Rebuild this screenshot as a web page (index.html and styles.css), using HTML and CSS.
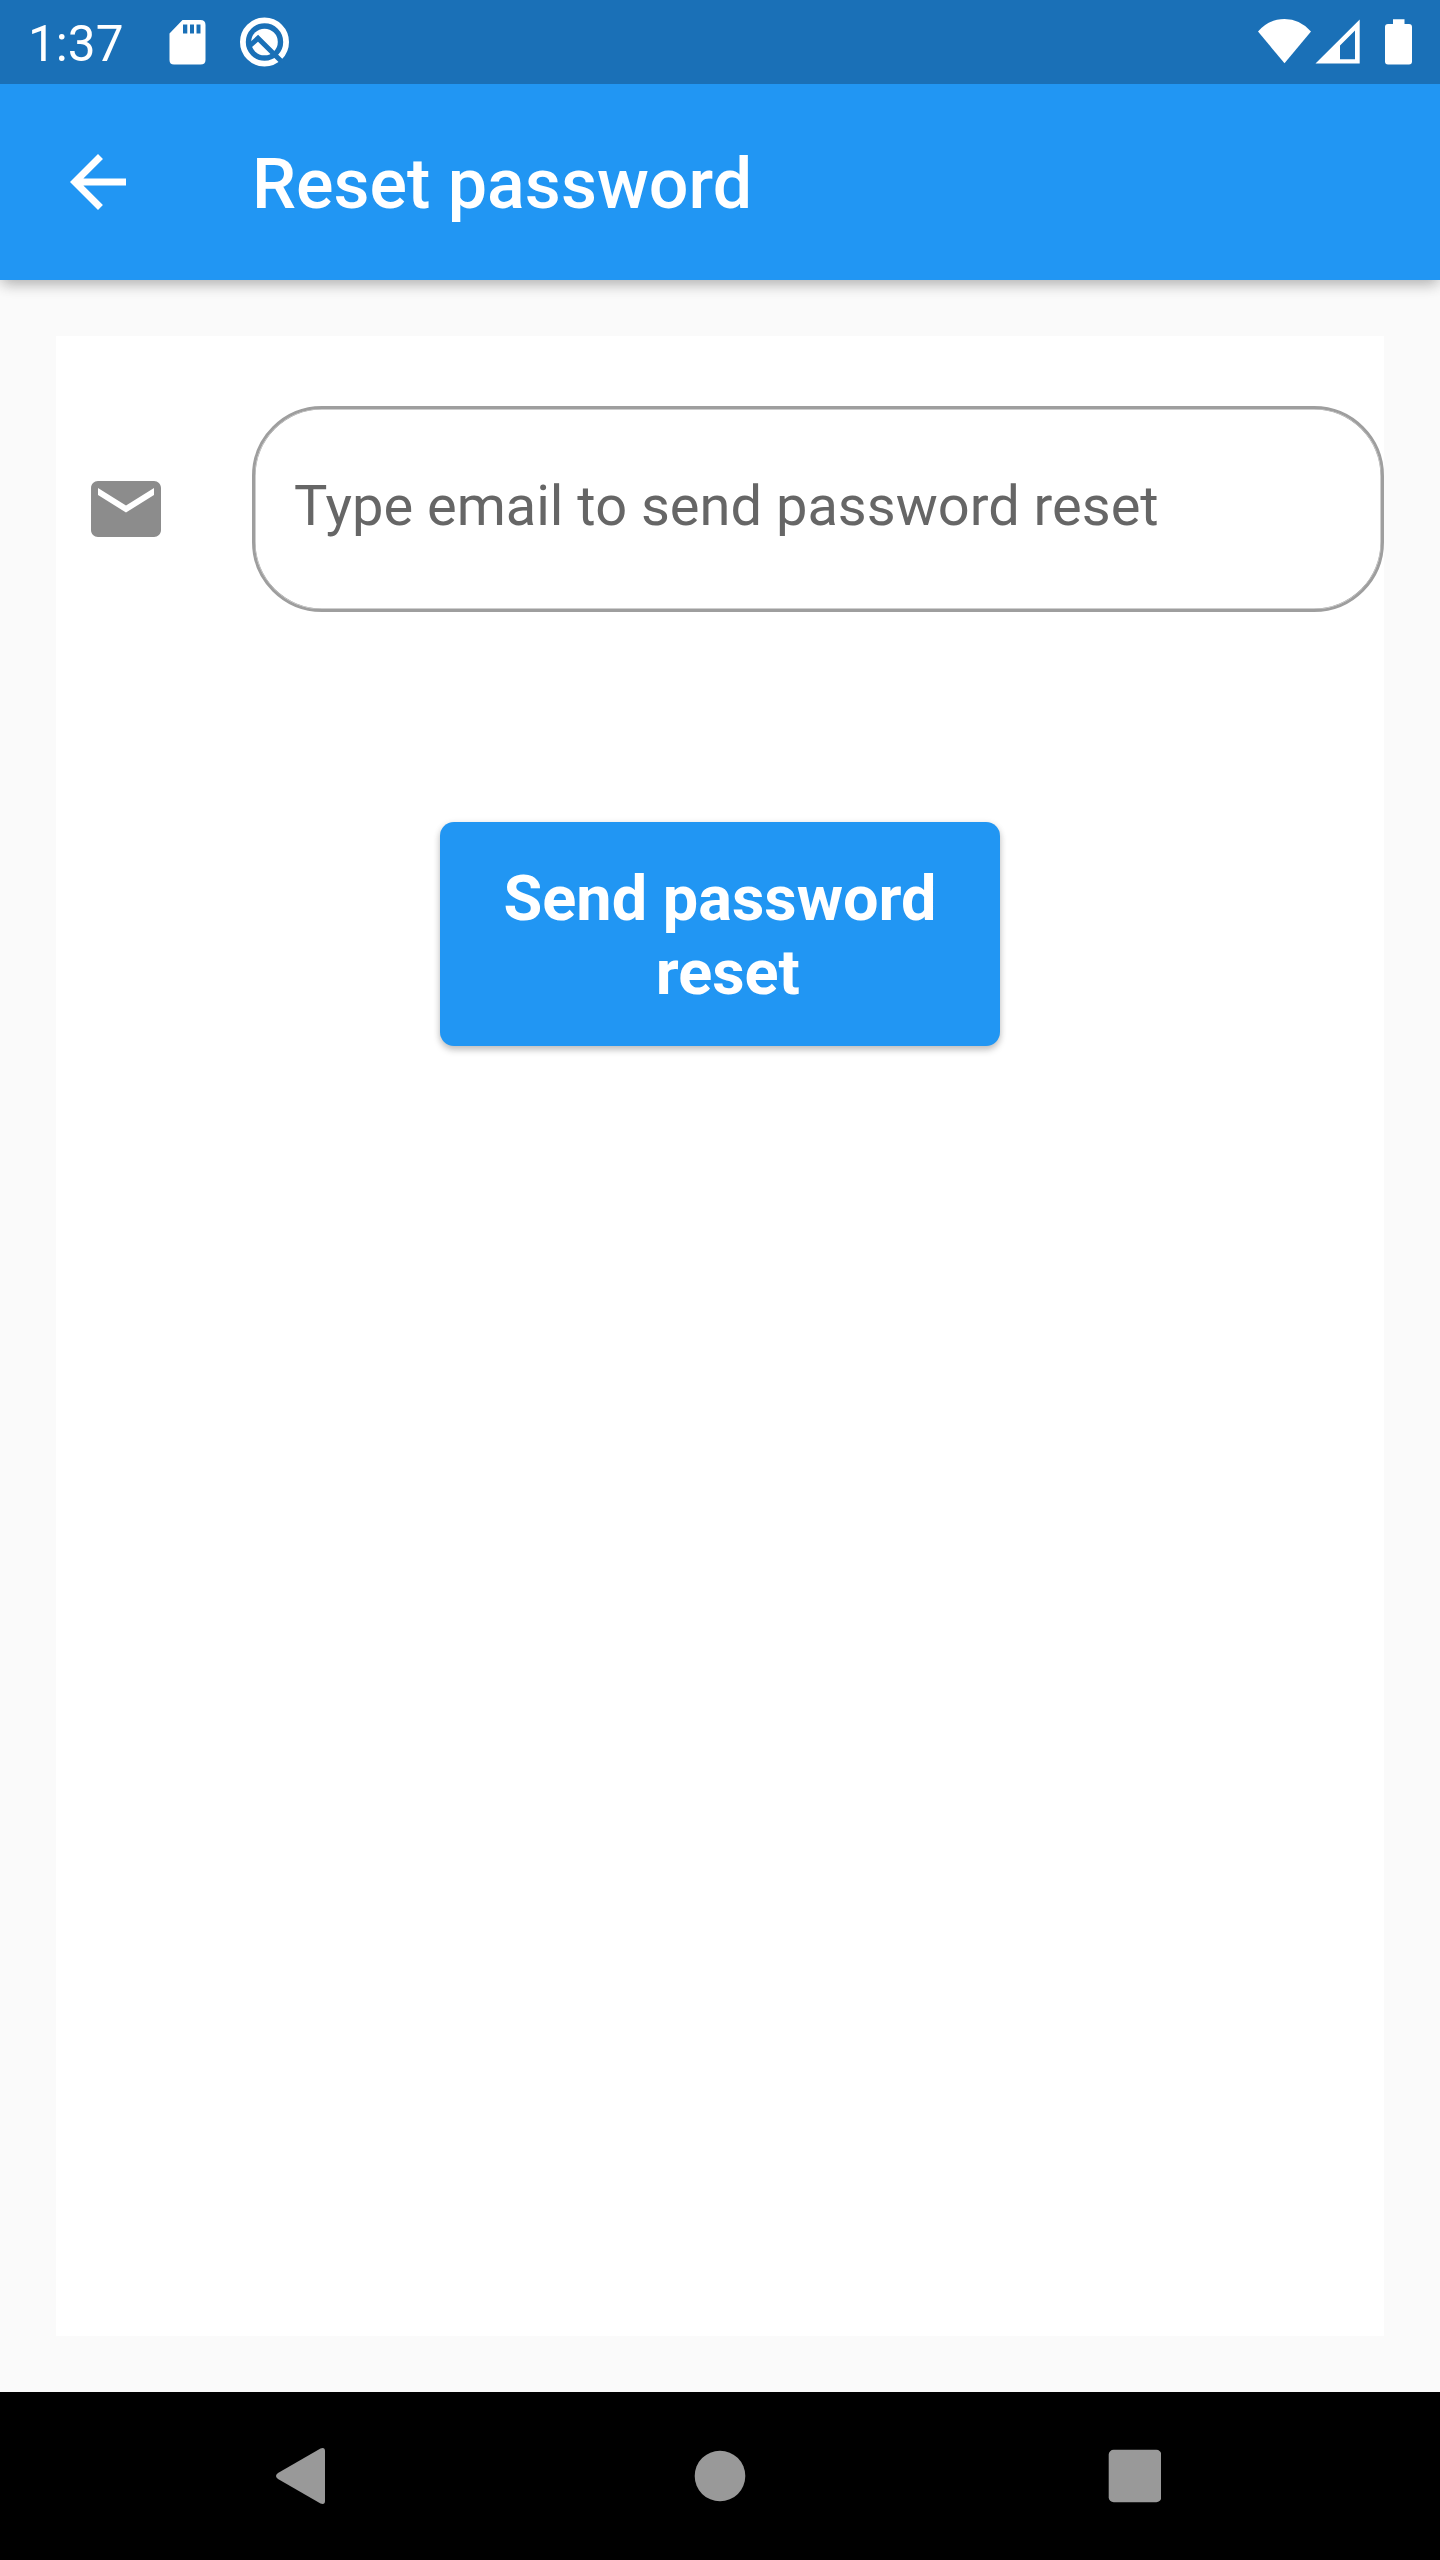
FILE: index.html
```html
<!DOCTYPE html>
<html lang="en">
<head>
<meta charset="utf-8">
<title>Reset password</title>
<link rel="stylesheet" href="styles.css">
</head>
<body>
<div class="screen">
  <div class="status-bar">
    <span class="clock">1:37</span>
    <svg class="status-left" width="120" height="84" viewBox="169 0 120 84" fill="#fff">
      <path fill-rule="evenodd" d="M182.500 20H200.500Q205.500 20 205.500 25V60Q205.500 64.500 200.500 64.500H174Q169.500 64.500 169.500 60V33.500ZM183 24.500V33.500H187.300V24.500ZM190 24.500V33.500H194V24.500ZM196.500 24.500V33.500H200.500V24.500Z"/>
      <circle cx="264.500" cy="42" r="21.600" fill="none" stroke="#fff" stroke-width="5.800"/>
      <circle cx="264.500" cy="42" r="13.300"/>
      <path d="M249.500 46L258 38.300L281 61" fill="none" stroke="#1a70b7" stroke-width="5"/>
    </svg>
    <svg class="status-right" width="154" height="84" viewBox="1258 0 154 84" fill="#fff">
      <path d="M1258 31.500Q1269 19 1284.500 19T1311 31.500L1284.500 63.300Z"/>
      <path fill-rule="evenodd" d="M1315.500 63.500L1359.700 19.500V63.500ZM1355 30.500L1340 45.500V59.300H1355Z"/>
      <path d="M1393 19.200H1404.500V24H1409Q1412 24 1412 27V61.500Q1412 64.500 1409 64.500H1388Q1385 64.500 1385 61.500V27Q1385 24 1388 24H1393Z"/>
    </svg>
  </div>
  <header class="app-bar">
    <svg class="icon" viewBox="0 0 24 24" fill="#fff"><path d="M20 11H7.830l5.590-5.590L12 4l-8 8 8 8 1.410-1.410L7.830 13H20v-2z"/></svg>
    <h1 class="title">Reset password</h1>
  </header>
  <main class="content">
    <form class="card">
      <div class="field-row">
        <svg class="icon" viewBox="0 0 24 24" fill="#8c8c8c"><path d="M20 4H4c-1.100 0-1.990.9-1.990 2L2 18c0 1.100.9 2 2 2h16c1.100 0 2-.9 2-2V6c0-1.100-.9-2-2-2zm0 4l-8 5-8-5V6l8 5 8-5v2z"/></svg>
        <div class="field"><span class="hint">Type email to send password reset</span></div>
      </div>
      <button class="submit" type="button">Send password
 reset</button>
    </form>
  </main>
  <nav class="nav-bar">
    <svg width="885" height="56" viewBox="276 2448 885 56" fill="#999">
      <path d="M278 2473L320.500 2448.500Q325 2447 325 2451V2501Q325 2505 320.500 2503.500L278 2479Q274 2476 278 2473Z"/>
      <circle cx="720" cy="2476" r="25.300"/>
      <rect x="1108.700" y="2449.700" width="52.600" height="52.600" rx="5"/>
    </svg>
  </nav>
</div>
</body>
</html>
```
FILE: styles.css
```css
* {
  box-sizing: border-box;
}

body {
  margin: 0;
  font-family: Roboto, "Liberation Sans", sans-serif;
}

svg {
  display: block;
  flex: none;
}

.screen {
  display: flex;
  flex-direction: column;
  width: 1440px;
  height: 2560px;
  background: #fafafa;
}

.status-bar {
  z-index: 1;
  display: flex;
  align-items: center;
  height: 84px;
  padding: 0 28px;
  background: #1a70b7;
  color: #fff;
}

.clock {
  width: 141px;
  padding-top: 4px;
  font-size: 49.500px;
  line-height: 58px;
}

.status-right {
  margin-left: auto;
}

.app-bar {
  display: flex;
  align-items: center;
  gap: 112px;
  height: 196px;
  padding: 0 56px;
  background: #2196f3;
  color: #fff;
  box-shadow: 0 7px 14px -3px rgba(0, 0, 0, 0.2), 0 3px 14px rgba(0, 0, 0, 0.14);
}

.icon {
  width: 84px;
  height: 84px;
}

.title {
  margin: 0;
  padding-top: 3px;
  font-size: 70px;
  font-weight: 500;
  line-height: 82px;
}

.content {
  display: flex;
  flex: 1;
  padding: 56px;
}

.card {
  display: flex;
  flex: 1;
  flex-direction: column;
  align-items: center;
  padding-top: 70px;
  background: #fff;
}

.field-row {
  display: flex;
  align-items: center;
  gap: 84px;
  width: 100%;
  padding-left: 28px;
}

.field {
  display: flex;
  flex: 1;
  align-items: center;
  height: 206px;
  padding: 0 39px;
  border: 3px solid #9e9e9e;
  border-radius: 70px;
  box-shadow: inset 0 0 0 0.500px #9e9e9e;
}

.hint {
  padding-bottom: 6px;
  color: #666;
  font-size: 56px;
  line-height: 66px;
}

.submit {
  width: 560px;
  height: 224px;
  margin: 210px 0 0;
  padding: 3px 0 0;
  border: 0;
  border-radius: 14px;
  background: #2196f3;
  box-shadow: 0 4px 7px rgba(0, 0, 0, 0.22), 0 1px 7px rgba(0, 0, 0, 0.08);
  color: #fff;
  font: 700 63px/73.500px Roboto, "Liberation Sans", sans-serif;
  text-align: center;
  white-space: pre;
}

.nav-bar {
  display: flex;
  align-items: center;
  height: 168px;
  padding-left: 276px;
  background: #000;
}
```
